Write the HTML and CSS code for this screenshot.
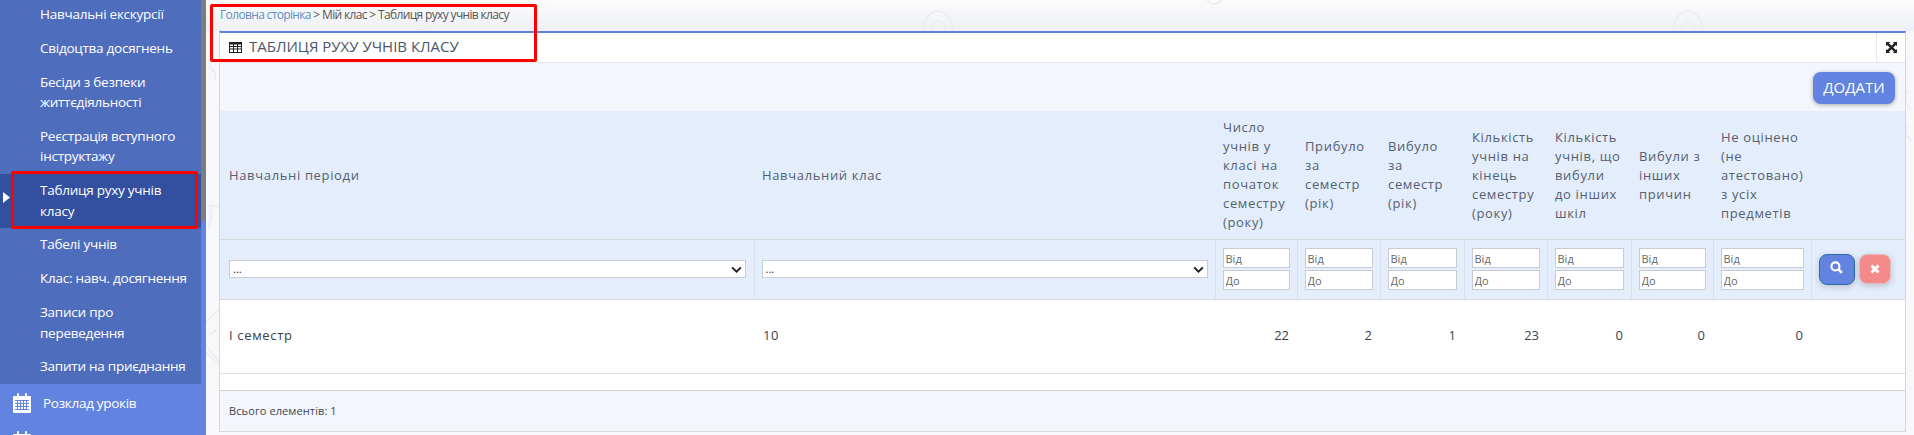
FILE: index.html
```html
<!DOCTYPE html>
<html>
	<head>
		<title>Таблиця руху учнів класу</title>
		<meta charset="utf-8">
		<link rel="stylesheet" href="styles.css">
	</head>

	<body>
		<aside class="sidebar">
			<div class="submenu">
				<a class="sub-item">Навчальні екскурсії</a>
				<a class="sub-item">Свідоцтва досягнень</a>
				<a class="sub-item">Бесіди з безпеки життєдіяльності</a>
				<a class="sub-item">Реєстрація вступного інструктажу</a>
				<a class="sub-item active">Таблиця руху учнів класу</a>
				<a class="sub-item">Табелі учнів</a>
				<a class="sub-item">Клас: навч. досягнення</a>
				<a class="sub-item">Записи про переведення</a>
				<a class="sub-item">Запити на приєднання</a>
			</div>
			<a class="main-item">
				<svg class="cal" viewBox="0 0 18 20"><path fill="#fff" d="M1 3h3V1a1 1 0 0 1 2 0v2h6V1a1 1 0 0 1 2 0v2h3a1 1 0 0 1 1 1v15a1 1 0 0 1-1 1H1a1 1 0 0 1-1-1V4a1 1 0 0 1 1-1z"/><path stroke="#6283df" fill="none" d="M2 7.500h14M2 10.500h14M2 13.500h14M2 16.500h14M4.500 7v10M7.500 7v10M10.500 7v10M13.500 7v10"/></svg>
				<span>Розклад уроків</span>
			</a>
			<a class="main-item">
				<svg class="cal" viewBox="0 0 18 20"><path fill="#fff" d="M1 3h3V1a1 1 0 0 1 2 0v2h6V1a1 1 0 0 1 2 0v2h3a1 1 0 0 1 1 1v15a1 1 0 0 1-1 1H1a1 1 0 0 1-1-1V4a1 1 0 0 1 1-1z"/></svg>
			</a>
			<svg class="arrow" viewBox="0 0 7 11"><path fill="#fff" d="M0 0l7 5.500L0 11z"/></svg>
			<div class="mark mark-side"></div>
		</aside>

		<main class="content">
			<svg class="swirls" viewBox="0 0 1708 435" fill="none" stroke="#ebecf0" stroke-width="1.500">
				<ellipse cx="214" cy="40" rx="24" ry="10"/>
				<ellipse cx="732" cy="32" rx="15" ry="21"/>
				<ellipse cx="732" cy="36" rx="8" ry="15"/>
				<ellipse cx="1482" cy="32" rx="15" ry="21"/>
				<ellipse cx="1482" cy="36" rx="8" ry="15"/>
				<ellipse cx="1008" cy="-2" rx="7" ry="6"/>
				<path d="M3 66c5 4 8 9 6 15M1 206h12M5 204c1 8 0 16-2 24M0 322c5-5 9-9 13-12M0 345c6 8 9 12 13 16M0 352c6 6 9 9 13 11M4 335c3-4 5-2 7-8"/>
				<path d="M1702 90c-4 6-3 14 3 20M1701 125c-3 6-1 12 5 16"/>
			</svg>

			<div class="crumbs"><a>Головна сторінка</a> &gt; Мій клас &gt; Таблиця руху учнів класу</div>

			<section class="panel">
				<header class="panel-head">
					<svg class="grid-ico" viewBox="0 0 13 11"><path fill="#222" d="M0 0h13v11H0z"/><path fill="#fff" d="M1 2.500h3v1.500H1zM5 2.500h3v1.500H5zM9 2.500h3v1.500H9zM1 5h3v1.500H1zM5 5h3v1.500H5zM9 5h3v1.500H9zM1 7.500h3V10H1zM5 7.500h3V10H5zM9 7.500h3V10H9z"/></svg>
					<h1>ТАБЛИЦЯ РУХУ УЧНІВ КЛАСУ</h1>
					<div class="expand">
						<svg viewBox="0 0 12 12"><path fill="#222" d="M0 0h4.500L3.200 1.300 6 4.100 8.800 1.300 7.500 0H12v4.500L10.700 3.200 7.900 6l2.800 2.800L12 7.500V12H7.500l1.300-1.300L6 7.900l-2.800 2.800L4.500 12H0V7.500l1.300 1.300L4.100 6 1.300 3.200 0 4.500z"/></svg>
					</div>
				</header>

				<div class="toolbar"><button class="add">ДОДАТИ</button></div>

				<table class="grid">
					<colgroup>
						<col class="c-period"><col class="c-class"><col class="c-a"><col class="c-b"><col class="c-c"><col class="c-d"><col class="c-e"><col class="c-f"><col class="c-g"><col>
					</colgroup>
					<thead>
						<tr class="titles">
							<th>Навчальні періоди</th>
							<th>Навчальний клас</th>
							<th>Число учнів у класі на початок семестру (року)</th>
							<th>Прибуло за семестр (рік)</th>
							<th class="tight">Вибуло за семестр (рік)</th>
							<th>Кількість учнів на кінець семестру (року)</th>
							<th>Кількість учнів, що вибули до інших шкіл</th>
							<th>Вибули з інших причин</th>
							<th>Не оцінено (не атестовано) з усіх предметів</th>
							<th></th>
						</tr>
						<tr class="filters">
							<td><div class="fake-select"><span>...</span><svg viewBox="0 0 12 8"><path fill="none" stroke="#222" stroke-width="2.200" d="M1 1.500l5 5 5-5"/></svg></div></td>
							<td><div class="fake-select"><span>...</span><svg viewBox="0 0 12 8"><path fill="none" stroke="#222" stroke-width="2.200" d="M1 1.500l5 5 5-5"/></svg></div></td>
							<td><input placeholder="Від"><input placeholder="До"></td>
							<td><input placeholder="Від"><input placeholder="До"></td>
							<td><input placeholder="Від"><input placeholder="До"></td>
							<td><input placeholder="Від"><input placeholder="До"></td>
							<td><input placeholder="Від"><input placeholder="До"></td>
							<td><input placeholder="Від"><input placeholder="До"></td>
							<td><input placeholder="Від"><input placeholder="До"></td>
							<td class="actions">
								<button class="btn-search"><svg viewBox="0 0 12 12"><circle cx="5" cy="5" r="3.700" fill="none" stroke="#fff" stroke-width="2"/><path stroke="#fff" stroke-width="2.400" d="M7.800 7.800l3.200 3.200"/></svg></button>
								<button class="btn-clear"><svg viewBox="0 0 10 10"><path stroke="#fff" stroke-width="3" d="M1.500 1.500l7 7M8.500 1.500l-7 7"/></svg></button>
							</td>
						</tr>
					</thead>
					<tbody>
						<tr class="row">
							<td>I семестр</td>
							<td>10</td>
							<td class="num">22</td>
							<td class="num">2</td>
							<td class="num">1</td>
							<td class="num">23</td>
							<td class="num">0</td>
							<td class="num">0</td>
							<td class="num">0</td>
							<td></td>
						</tr>
						<tr class="spacer"><td colspan="10"></td></tr>
					</tbody>
				</table>

				<footer class="panel-foot">Всього елементів: 1</footer>
			</section>

			<div class="mark mark-title"></div>
		</main>
	</body>
</html>
```

FILE: styles.css
```css
html,body {
	margin: 0;
	padding: 0;
	height: 435px;
	overflow: hidden;
}

body {
	display: flex;
	font-family: 'Open Sans', sans-serif;
}

/* sidebar */

.sidebar {
	position: relative;
	flex: none;
	width: 206px;
	height: 435px;
	overflow: hidden;
	background-color: #6283df;
}

.sidebar::before {
	content: "";
	position: absolute;
	top: 0;
	left: 201px;
	width: 5px;
	height: 221px;
	background-color: #7b7d80;
}

.submenu {
	width: 201px;
	background-color: #4f6dbd;
	margin-top: -2px;
}

.sub-item {
	display: block;
	padding: 6px 10px 7.300px 40px;
	font-size: 13.500px;
	line-height: 20.500px;
	letter-spacing: -0.250px;
	color: #fff;
}

.sub-item.active {
	background-color: #334fa0;
}

.main-item {
	display: flex;
	align-items: center;
	height: 38px;
	padding-left: 13px;
	font-size: 13.500px;
	letter-spacing: -0.300px;
	color: #fff;
}

.main-item span {
	margin-left: 12px;
}

.cal {
	width: 18px;
	height: 20px;
}

.arrow {
	position: absolute;
	top: 192px;
	left: 3px;
	width: 7px;
	height: 11px;
}

/* content */

.content {
	position: relative;
	flex: 1;
	padding: 0 8px 0 13px;
	min-width: 0;
	background: linear-gradient(#fbfbfb, #eef0f5 31px, #f8f8fa 32px);
}

.swirls {
	position: absolute;
	top: 0;
	left: 0;
	width: 100%;
	height: 100%;
}

.crumbs {
	position: relative;
	height: 31px;
	padding-left: 1px;
	font-size: 12px;
	line-height: 30px;
	letter-spacing: -0.650px;
	color: #555;
}

.crumbs a {
	color: #5f8fc4;
}

.panel {
	position: relative;
	border: 1px solid #d4d6da;
	border-top: 2px solid #5f82dd;
	background-color: #f3f7fb;
}

.panel-head {
	display: flex;
	align-items: center;
	height: 29px;
	padding-left: 9px;
	background-color: #fff;
	border-bottom: 1px solid #e6eaf0;
}

.grid-ico {
	width: 13px;
	height: 11px;
	margin-right: 7px;
}

h1 {
	flex: 1;
	margin: 0 0 3px;
	font-size: 15px;
	font-weight: 400;
	color: #4d5668;
}

.expand {
	display: flex;
	align-items: center;
	justify-content: center;
	width: 28px;
	height: 100%;
	border-left: 1px solid #e6eaf0;
}

.expand svg {
	width: 11px;
	height: 11px;
}

.toolbar {
	display: flex;
	justify-content: flex-end;
	align-items: flex-start;
	height: 48px;
	padding: 9px 10px 0 0;
	box-sizing: border-box;
}

.add {
	width: 82px;
	height: 32px;
	padding: 0 0 2px;
	border: 0;
	border-radius: 8px;
	background-color: #6283df;
	box-shadow: 0 1px 4px #0000004d;
	font: 400 15px 'Open Sans', sans-serif;
	color: #fff;
}

/* table */

.grid {
	width: 100%;
	table-layout: fixed;
	border-collapse: collapse;
}

.c-period { width: 534px; }
.c-class { width: 461px; }
.c-a { width: 82px; }
.c-b { width: 83px; }
.c-c { width: 84px; }
.c-d { width: 83px; }
.c-e { width: 84px; }
.c-f { width: 82px; }
.c-g { width: 98px; }

.titles {
	height: 128px;
	background-color: #e3edfb;
}

.titles th {
	padding: 1px 7px 0 8px;
	font-size: 13px;
	font-weight: 400;
	line-height: 19px;
	letter-spacing: 0.650px;
	text-align: left;
	color: #565f70;
}

.titles th:first-child {
	padding-left: 9px;
}

.titles th.tight {
	padding-right: 14px;
}

.filters {
	height: 60px;
	background-color: #e3edfb;
	border-top: 1px solid #d6d9de;
	border-bottom: 1px solid #d6d9de;
}

.filters td {
	padding: 0 7px;
	border-left: 1px solid #d9e0ea;
}

.filters td:first-child {
	padding: 0 8px 0 9px;
	border-left: 0;
}

.fake-select {
	display: flex;
	align-items: center;
	justify-content: space-between;
	height: 16px;
	padding: 0 3px;
	background-color: #fff;
	border: 1px solid #c9ccd1;
}

.fake-select span {
	font-size: 11px;
	line-height: 14px;
	color: #222;
}

.fake-select svg {
	width: 11px;
	height: 7px;
}

input {
	display: block;
	box-sizing: border-box;
	width: 100%;
	height: 20px;
	margin: 2px 0;
	padding: 0 2px;
	border: 1px solid #c9ccd1;
	background-color: #fff;
	font: 11px 'Open Sans', sans-serif;
}

input::placeholder {
	color: #666;
	opacity: 1;
}

.filters td.actions {
	padding: 0 0 0 7px;
	white-space: nowrap;
}

.actions button {
	padding: 0;
	vertical-align: middle;
	border-radius: 8px;
}

.btn-search {
	width: 36px;
	height: 31px;
	border: 1px solid #2f6aa8;
	background-color: #6283df;
	box-shadow: 0 2px 6px #0000002e;
}

.btn-clear {
	width: 32px;
	height: 30px;
	margin-left: 0;
	border: 1px solid #e0bcbc;
	background-color: #f58a8a;
	box-shadow: 0 2px 6px #0000002e;
}

.btn-search svg {
	width: 13px;
	height: 13px;
}

.btn-clear svg {
	width: 10px;
	height: 10px;
}

.row {
	height: 74px;
	background-color: #fff;
	border-bottom: 1px solid #e0e0e2;
}

.row td {
	padding: 0 8px 3px 9px;
	font-size: 13px;
	letter-spacing: 0.650px;
	color: #3a3f4a;
}

.row td.num {
	text-align: right;
	padding-right: 8px;
	letter-spacing: 0;
}

.spacer {
	height: 17px;
	background-color: #fff;
	border-bottom: 1px solid #cfd1d4;
}

.panel-foot {
	height: 40px;
	padding-left: 9px;
	font-size: 11px;
	line-height: 40px;
	letter-spacing: 0.100px;
	color: #3f4450;
}

/* red annotation boxes */

.mark {
	position: absolute;
	box-sizing: border-box;
	border: 3px solid #f00;
	border-radius: 2px;
}

.mark-side {
	top: 171px;
	left: 11px;
	width: 187px;
	height: 58px;
}

.mark-title {
	top: 4px;
	left: 4px;
	width: 327px;
	height: 58px;
}
```
